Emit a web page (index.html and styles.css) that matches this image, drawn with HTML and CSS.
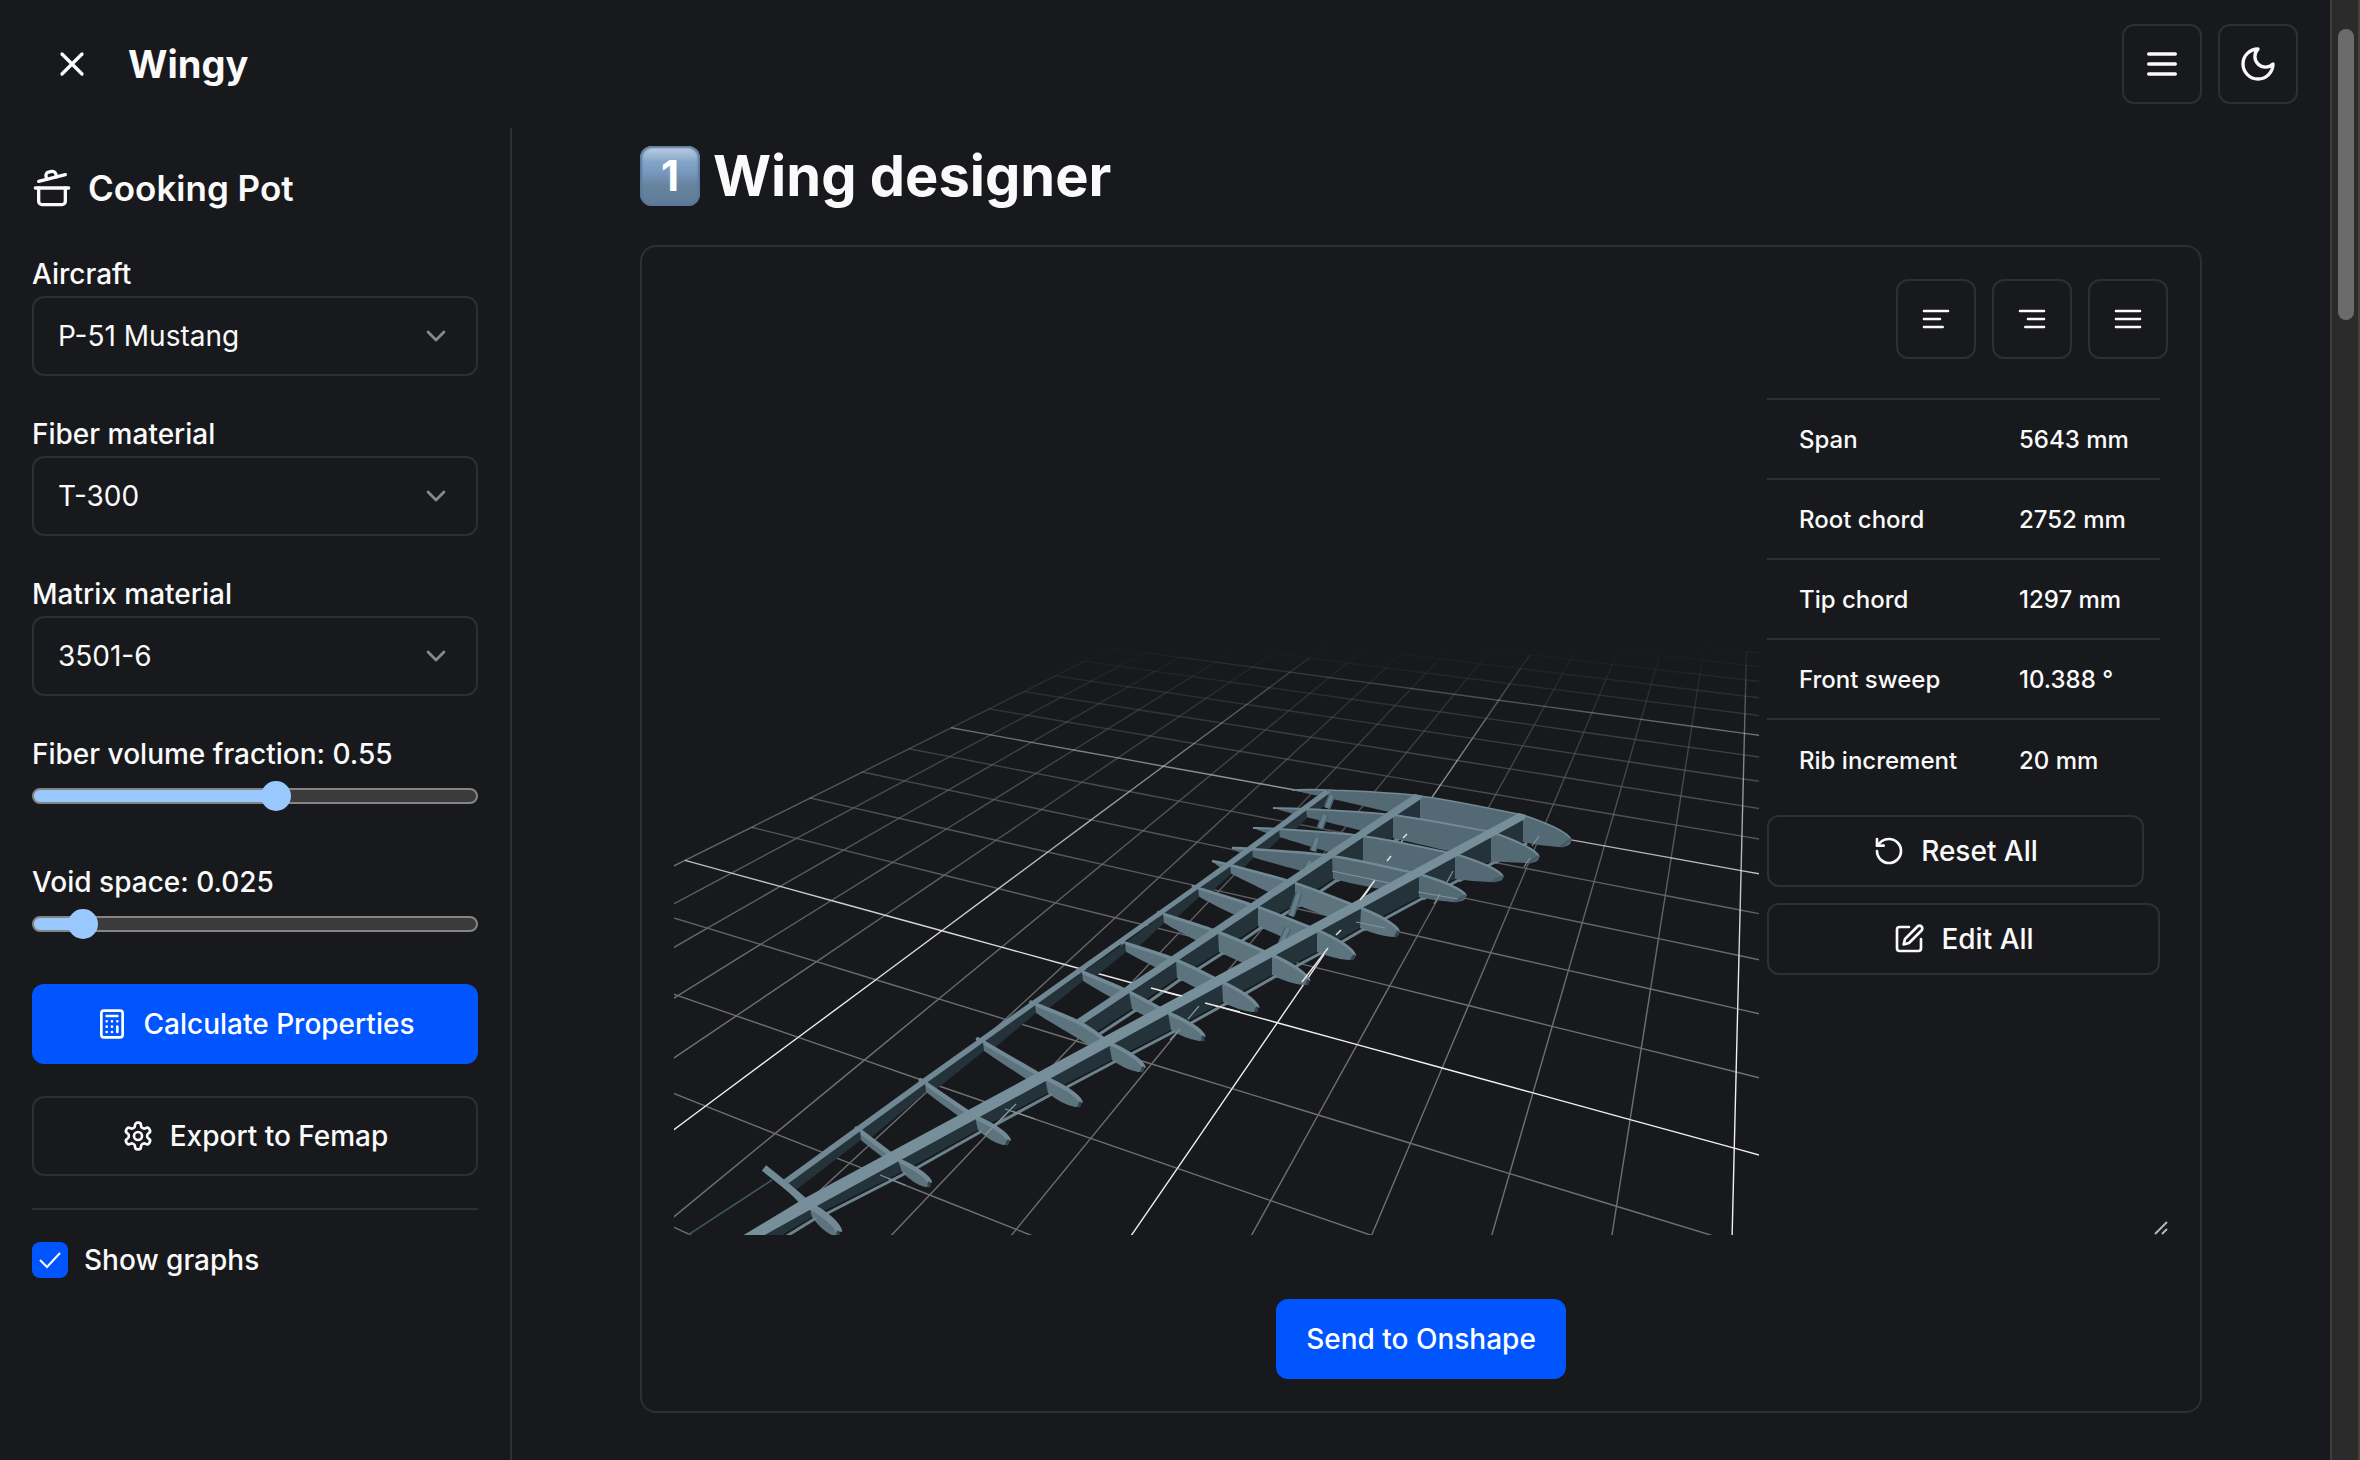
FILE: index.html
```html
<!DOCTYPE html>
<html lang="en">
<head>
  <meta charset="UTF-8">
  <title>Wingy</title>
  <link rel="stylesheet" href="styles.css">
</head>
<body>

<div class="app">
  <header class="header">
    <button class="icon-btn icon-btn-plain" aria-label="Close sidebar">
      <svg class="icon icon-lg" viewBox="0 0 24 24"><path d="M18 6 6 18"/><path d="m6 6 12 12"/></svg>
    </button>
    <a class="brand" href="#">Wingy</a>
    <nav class="header-nav">
      <button class="icon-btn" aria-label="Menu">
        <svg class="icon icon-lg" viewBox="0 0 24 24"><path d="M4 6h16M4 12h16M4 18h16"/></svg>
      </button>
      <button class="icon-btn" aria-label="Toggle theme">
        <svg class="icon icon-lg" viewBox="0 0 24 24"><path d="M12 3a6 6 0 0 0 9 9 9 9 0 1 1-9-9Z"/></svg>
      </button>
    </nav>
  </header>

  <div class="body">
    <aside class="sidebar">
      <h2 class="sidebar-title">
        <svg class="icon icon-lg" viewBox="0 0 24 24"><path d="M2 12h20"/><path d="M20 12v8a2 2 0 0 1-2 2H6a2 2 0 0 1-2-2v-8"/><path d="m4 8 16-4"/><path d="m8.86 6.78-.45-1.81a2 2 0 0 1 1.45-2.43l1.94-.48a2 2 0 0 1 2.43 1.46l.45 1.8"/></svg>
        Cooking Pot
      </h2>

      <div class="fields">
        <div class="field">
          <label for="aircraft">Aircraft</label>
          <div class="select">
            <select id="aircraft"><option>P-51 Mustang</option></select>
            <svg class="icon" viewBox="0 0 24 24"><path d="m6 9 6 6 6-6"/></svg>
          </div>
        </div>
        <div class="field">
          <label for="fiber">Fiber material</label>
          <div class="select">
            <select id="fiber"><option>T-300</option></select>
            <svg class="icon" viewBox="0 0 24 24"><path d="m6 9 6 6 6-6"/></svg>
          </div>
        </div>
        <div class="field">
          <label for="matrix">Matrix material</label>
          <div class="select">
            <select id="matrix"><option>3501-6</option></select>
            <svg class="icon" viewBox="0 0 24 24"><path d="m6 9 6 6 6-6"/></svg>
          </div>
        </div>
        <div class="field field-range">
          <label for="fraction">Fiber volume fraction: 0.55</label>
          <input type="range" id="fraction" min="0" max="1" step="0.01" value="0.55" style="--fill: 55%">
        </div>
        <div class="field field-range">
          <label for="void">Void space: 0.025</label>
          <input type="range" id="void" min="0" max="0.3" step="0.005" value="0.025" style="--fill: 9%">
        </div>
      </div>

      <div class="actions">
        <button class="btn btn-primary">
          <svg class="icon" viewBox="0 0 24 24"><rect x="4" y="2" width="16" height="20" rx="2"/><path d="M8 6h8M16 14v4M16 10h.01M12 10h.01M8 10h.01M12 14h.01M8 14h.01M12 18h.01M8 18h.01"/></svg>
          Calculate Properties
        </button>
        <button class="btn">
          <svg class="icon" viewBox="0 0 24 24"><path d="M12.22 2h-.44a2 2 0 0 0-2 2v.18a2 2 0 0 1-1 1.73l-.43.25a2 2 0 0 1-2 0l-.15-.08a2 2 0 0 0-2.73.73l-.22.38a2 2 0 0 0 .73 2.73l.15.1a2 2 0 0 1 1 1.72v.51a2 2 0 0 1-1 1.74l-.15.09a2 2 0 0 0-.73 2.73l.22.38a2 2 0 0 0 2.73.73l.15-.08a2 2 0 0 1 2 0l.43.25a2 2 0 0 1 1 1.73V20a2 2 0 0 0 2 2h.44a2 2 0 0 0 2-2v-.18a2 2 0 0 1 1-1.73l.43-.25a2 2 0 0 1 2 0l.15.08a2 2 0 0 0 2.73-.73l.22-.39a2 2 0 0 0-.73-2.73l-.15-.08a2 2 0 0 1-1-1.74v-.5a2 2 0 0 1 1-1.74l.15-.09a2 2 0 0 0 .73-2.73l-.22-.38a2 2 0 0 0-2.73-.73l-.15.08a2 2 0 0 1-2 0l-.43-.25a2 2 0 0 1-1-1.73V4a2 2 0 0 0-2-2z"/><circle cx="12" cy="12" r="3"/></svg>
          Export to Femap
        </button>
      </div>

      <hr class="divider">

      <div class="check">
        <span class="check-box">
          <input type="checkbox" id="graphs" checked>
          <svg viewBox="0 0 36 36"><path d="m8 18 7 7 13-14"/></svg>
        </span>
        <label for="graphs">Show graphs</label>
      </div>
    </aside>

    <main class="main">
      <h1 class="page-title"><span class="keycap">1</span>Wing designer</h1>

      <section class="card">
        <div class="viewer">
          <svg class="scene" id="scene" viewBox="674 276 1085 959" preserveAspectRatio="xMidYMax slice" role="img" aria-label="Wing model"></svg>

          <div class="panel">
            <div class="toolbar">
              <button class="icon-btn" aria-label="Align left">
                <svg class="icon" viewBox="0 0 24 24"><path d="M21 6H3M15 12H3M17 18H3"/></svg>
              </button>
              <button class="icon-btn" aria-label="Align right">
                <svg class="icon" viewBox="0 0 24 24"><path d="M21 6H3M21 12H9M21 18H7"/></svg>
              </button>
              <button class="icon-btn" aria-label="Justify">
                <svg class="icon" viewBox="0 0 24 24"><path d="M21 6H3M21 12H3M21 18H3"/></svg>
              </button>
            </div>

            <table class="specs">
              <tr><th>Span</th><td>5643 mm</td></tr>
              <tr><th>Root chord</th><td>2752 mm</td></tr>
              <tr><th>Tip chord</th><td>1297 mm</td></tr>
              <tr><th>Front sweep</th><td>10.388 °</td></tr>
              <tr><th>Rib increment</th><td>20 mm</td></tr>
            </table>

            <div class="panel-actions">
              <button class="btn btn-sm btn-reset">
                <svg class="icon" viewBox="0 0 24 24"><path d="M3 12a9 9 0 1 0 9-9 9.75 9.75 0 0 0-6.74 2.74L3 8"/><path d="M3 3v5h5"/></svg>
                Reset All
              </button>
              <button class="btn btn-sm">
                <svg class="icon" viewBox="0 0 24 24"><path d="M12 3H5a2 2 0 0 0-2 2v14a2 2 0 0 0 2 2h14a2 2 0 0 0 2-2v-7"/><path d="M18.375 2.625a2.121 2.121 0 1 1 3 3L12 15l-4 1 1-4Z"/></svg>
                Edit All
              </button>
            </div>
          </div>
          <svg class="grip" viewBox="0 0 14 14"><path d="M1 13 13 1M8 13l5-5"/></svg>
        </div>

        <button class="btn btn-primary btn-send">Send to Onshape</button>
      </section>
    </main>
  </div>
</div>

<div class="scrollbar"><div class="scrollbar-thumb"></div></div>

<script src="scene.js"></script>
</body>
</html>
```

FILE: styles.css
```css
* {
  margin: 0;
  padding: 0;
  box-sizing: border-box;
}

:root {
  --bg: #18191c;
  --border: #2e2f36;
  --text: #fafafa;
  --blue: #0055ff;
  --radius: 12px;
}

html, body {
  height: 100%;
}

body {
  display: flex;
  overflow: hidden;
  background: var(--bg);
  color: var(--text);
  font: 500 28px/40px Inter, "Liberation Sans", sans-serif;
}

button, select, input {
  font: inherit;
  color: inherit;
}

.app {
  flex: 1;
  display: flex;
  flex-direction: column;
}

.icon {
  flex: none;
  width: 32px;
  height: 32px;
  fill: none;
  stroke: currentColor;
  stroke-width: 2;
  stroke-linecap: round;
  stroke-linejoin: round;
}

.icon-lg {
  width: 40px;
  height: 40px;
}

/* header */
.header {
  display: flex;
  align-items: center;
  gap: 16px;
  height: 128px;
  padding: 0 32px;
}

.brand {
  color: inherit;
  font-size: 38px;
  font-weight: 700;
  text-decoration: none;
}

.header-nav {
  display: flex;
  gap: 16px;
  margin-left: auto;
}

.icon-btn {
  display: flex;
  align-items: center;
  justify-content: center;
  width: 80px;
  height: 80px;
  background: none;
  border: 2px solid var(--border);
  border-radius: var(--radius);
}

.icon-btn-plain {
  border-color: transparent;
}

.body {
  flex: 1;
  display: flex;
}

/* sidebar */
.sidebar {
  width: 512px;
  padding: 40px 32px;
  border-right: 2px solid var(--border);
}

.sidebar-title {
  display: flex;
  align-items: center;
  gap: 16px;
  font-size: 35px;
  font-weight: 600;
}

.fields {
  display: flex;
  flex-direction: column;
  gap: 36px;
  margin-top: 44px;
}

.field {
  display: flex;
  flex-direction: column;
}

.field label {
  line-height: 44px;
}

.select {
  display: grid;
  align-items: center;
}

.select > * {
  grid-area: 1 / 1;
}

.select select {
  width: 100%;
  height: 80px;
  padding: 0 24px;
  appearance: none;
  background: none;
  border: 2px solid var(--border);
  border-radius: var(--radius);
  font-weight: 400;
}

.select .icon {
  justify-self: end;
  margin-right: 26px;
  color: #8b8b8d;
  pointer-events: none;
}

.field-range + .field-range {
  margin-top: 8px;
}

input[type="range"] {
  width: 100%;
  height: 40px;
  appearance: none;
  background: none;
}

input[type="range"]::-webkit-slider-runnable-track {
  height: 16px;
  border: 2px solid #858585;
  border-radius: 8px;
  background: linear-gradient(to right, #99c8ff var(--fill), #3b3b3b var(--fill));
}

input[type="range"]::-webkit-slider-thumb {
  appearance: none;
  width: 30px;
  height: 30px;
  margin-top: -9px;
  border-radius: 50%;
  background: #99c8ff;
}

.actions {
  display: flex;
  flex-direction: column;
  gap: 32px;
  margin-top: 40px;
}

.btn {
  display: flex;
  align-items: center;
  justify-content: center;
  gap: 16px;
  height: 80px;
  padding: 0 30px;
  background: var(--bg);
  border: 2px solid var(--border);
  border-radius: var(--radius);
}

.btn-sm {
  height: 72px;
}

.btn-primary {
  background: var(--blue);
  border: 0;
  color: #fff;
}

.divider {
  margin: 32px 0;
  border: 0;
  border-top: 2px solid var(--border);
}

.check {
  display: flex;
  align-items: center;
  gap: 16px;
  height: 36px;
}

.check-box {
  display: grid;
  width: 36px;
  height: 36px;
}

.check-box > * {
  grid-area: 1 / 1;
}

.check input {
  appearance: none;
  border-radius: 8px;
  background: var(--blue);
}

.check svg {
  fill: none;
  stroke: #fff;
  stroke-width: 2;
  pointer-events: none;
}

/* main */
.main {
  flex: 1;
  padding: 16px 128px 0;
}

.page-title {
  display: flex;
  align-items: center;
  gap: 13px;
  font-size: 56px;
  font-weight: 700;
  line-height: 64px;
}

.keycap {
  width: 60px;
  height: 60px;
  border-radius: 12px;
  background: linear-gradient(#c3d3e6, #84a5c9 26%, #7698bd 45%, #67849f 65%, #5d7b97);
  box-shadow: inset 0 0 2px 2px #59789a;
  color: #fff;
  font-size: 42px;
  line-height: 60px;
  text-align: center;
}

.card {
  margin-top: 37px;
  padding: 32px;
  border: 2px solid var(--border);
  border-radius: 16px;
}

.viewer {
  position: relative;
  display: flex;
  gap: 8px;
  height: 956px;
}

.scene {
  flex: 1;
  min-width: 0;
  height: 100%;
}

.panel {
  width: 401px;
}

.toolbar {
  display: flex;
  justify-content: flex-end;
  gap: 16px;
}

.specs {
  width: 393px;
  margin-top: 39px;
  border-collapse: collapse;
  font-size: 24px;
}

.specs tr {
  height: 80px;
  border-top: 2px solid var(--border);
}

.specs th,
.specs td {
  padding: 2px 0 0 32px;
  font-weight: 500;
  text-align: left;
  white-space: nowrap;
}

.specs th {
  width: 220px;
}

.panel-actions {
  display: flex;
  flex-direction: column;
  gap: 16px;
  margin: 16px 8px 0 0;
}

.btn-reset {
  margin-right: 16px;
}

.grip {
  position: absolute;
  right: 0;
  bottom: 0;
  width: 14px;
  height: 14px;
  fill: none;
  stroke: #b5b5b5;
  stroke-width: 2;
}

.btn-send {
  margin: 64px auto 0;
}

/* page scrollbar */
.scrollbar {
  width: 30px;
  padding: 29px 4px 0 6px;
  background: #2b2b2b;
  border-left: 2px solid #3d3d3d;
  border-right: 2px solid #424242;
}

.scrollbar-thumb {
  height: 291px;
  border-radius: 8px;
  background: #6b6b6b;
}
```

FILE: scene.js
```javascript
var NS = "http://www.w3.org/2000/svg";
var scene = document.getElementById("scene");

function add(tag, attrs) {
  var el = document.createElementNS(NS, tag);
  for (var key in attrs) {
    el.setAttribute(key, attrs[key]);
  }
  scene.appendChild(el);
}

function poly(points, fill) {
  add("polygon", {points: points.join(" "), fill: fill});
}

function line(a, b, color, width, cap) {
  add("line", {x1: a[0], y1: a[1], x2: b[0], y2: b[1], stroke: color, "stroke-width": width, "stroke-linecap": cap || "butt"});
}

//1 floor grid, projected from cell coordinates
function depth(u, v) {
  return 1 - 0.01763 * u - 0.04976 * v;
}

function project(u, v) {
  var w = depth(u, v);
  return [(951.1 + 21.97 * u - 87.3 * v) / w, (727.8 - 5.83 * u - 16.3 * v) / w];
}

function gridCell(u1, v1, u2, v2, major) {
  if (depth(u1, v1) < 0.05 || depth(u2, v2) < 0.05) return;
  //the lines fade out with distance
  var alpha = (1.25 - depth((u1 + u2) / 2, (v1 + v2) / 2)) * 1.5;
  alpha = Math.max(0, Math.min(1, alpha));
  if (alpha === 0) return;
  //only half of the outer line is inside the plane
  if (u1 === 0 && u2 === 0) alpha = alpha / 2;
  var grey = major ? "rgba(240,240,240," : "rgba(112,112,115,";
  line(project(u1, v1), project(u2, v2), grey + alpha.toFixed(2) + ")", 1.4);
}

function drawGrid(major) {
  for (var i = 0; i <= 18; i++) {
    for (var j = -14; j <= 16; j++) {
      if ((i % 5 === 0) === major && i <= 15) gridCell(i, j, i, j + 1, major);
      if ((j % 5 === 0) === major) gridCell(i, j, i + 1, j, major);
    }
  }
}

drawGrid(false);
drawGrid(true);

//2 ribs from root to tip
// t: tail, r m f: top at the rear, middle and front spar, mb fb: bottom there, n: nose, nb: under the nose
var ribs = [
  {t: [1292, 790], r: [1328, 790], m: [1420, 796], mb: [1420, 819], f: [1523, 815], fb: [1523, 842], n: [1571, 840], nb: [1558, 847]},
  {t: [1273, 808], r: [1306, 809], m: [1393, 815], mb: [1393, 838], f: [1491, 832], fb: [1491, 861], n: [1539, 857], nb: [1526, 863]},
  {t: [1253, 828], r: [1279, 829], m: [1363, 836], mb: [1363, 861], f: [1455, 854], fb: [1455, 879], n: [1503, 877], nb: [1490, 882]},
  {t: [1232, 848], r: [1252, 849], m: [1332, 856], mb: [1333, 879], f: [1419, 874], fb: [1419, 897], n: [1466, 896], nb: [1452, 902]},
  {t: [1212, 861], r: [1230, 865], m: [1295, 883], mb: [1295, 904], f: [1361, 908], fb: [1360, 928], n: [1399, 932], nb: [1392, 937]},
  {t: [1196, 887], r: [1198, 888], m: [1258, 907], mb: [1258, 926], f: [1317, 930], fb: [1317, 952], n: [1355, 956], nb: [1348, 960]},
  {t: [1161, 913], r: [1163, 914], m: [1218, 932], mb: [1219, 952], f: [1272, 955], fb: [1272, 975], n: [1309, 981], nb: [1303, 985]},
  {t: [1123, 942], r: [1125, 943], m: [1176, 960], mb: [1177, 978], f: [1222, 982], fb: [1223, 1002], n: [1258, 1008], nb: [1252, 1012]},
  {t: [1080, 971], r: [1082, 972], m: [1129, 992], mb: [1132, 1009], f: [1168, 1013], fb: [1171, 1030], n: [1204, 1037], nb: [1199, 1041]},
  {t: [1033, 1003], r: [1035, 1004], m: [1080, 1023], mb: [1082, 1041], f: [1109, 1043], fb: [1112, 1060], n: [1144, 1068], nb: [1138, 1072]},
  {t: [981, 1041], r: [983, 1042], f: [1045, 1078], fb: [1048, 1093], n: [1081, 1103], nb: [1075, 1107]},
  {t: [923, 1082], r: [925, 1083], f: [975, 1117], fb: [978, 1130], n: [1009, 1141], nb: [1003, 1145]},
  {t: [858, 1130], r: [860, 1131], f: [898, 1160], fb: [902, 1172], n: [930, 1183], nb: [925, 1187]},
  {t: [764, 1168], r: [784, 1184], f: [809, 1205], fb: [812, 1217], n: [839, 1232], nb: [834, 1236]},
  {t: [660, 1252], r: [676, 1262], f: [706, 1265], fb: [710, 1279], n: [730, 1290], nb: [725, 1295]}
];

//smooth line through the points
function curve(p) {
  var d = "";
  for (var i = 0; i < p.length - 1; i++) {
    var a = p[i - 1] || p[i], b = p[i], c = p[i + 1], e = p[i + 2] || c;
    d += " C" + [b[0] + (c[0] - a[0]) / 6, b[1] + (c[1] - a[1]) / 6,
      c[0] - (e[0] - b[0]) / 6, c[1] - (e[1] - b[1]) / 6, c[0], c[1]].join(" ");
  }
  return d;
}

function drawRib(rib, k) {
  var top = rib.m ? [rib.t, rib.r, rib.m, rib.f] : [rib.t, rib.r, rib.f];
  var low = [rib.fb];
  if (rib.mb) low.push(rib.mb);
  low.push([rib.r[0], rib.r[1] + (k === 13 ? 3 : 8)], rib.t);
  //round nose: the edge leaves the spar along the rib and turns down at the tip
  var dx = rib.n[0] - rib.f[0], dy = rib.n[1] - rib.f[1];
  var nose = " C" + [rib.f[0] + dx * 0.45, rib.f[1] + dy * 0.28,
    rib.n[0] - dx * 0.04, rib.n[1] - dy * 0.3, rib.n[0], rib.n[1]].join(" ");
  var chin = " Q" + [rib.n[0] + 1, rib.nb[1], rib.nb[0], rib.nb[1]].join(" ") +
    " Q" + [(rib.nb[0] + rib.fb[0]) / 2, rib.nb[1] - (rib.nb[1] - rib.fb[1]) * 0.2, rib.fb[0], rib.fb[1]].join(" ");
  var start = "M" + rib.t.join(" ") + curve(top) + nose;
  add("path", {d: start + chin + curve(low) + "Z", fill: k < 4 ? "#536973" : "#5d747e"});
  add("path", {d: start, fill: "none", stroke: "#728a95", "stroke-width": 1.6 + k * 0.25 + (k === 13 ? 2 : 0)});
  //shaded nose
  line([rib.n[0] - 1, rib.n[1]], [rib.nb[0] + 4, rib.nb[1] - 1], k < 4 ? "#465b65" : "#33454e", 3, "round");
}

function web(a, al, b, bl) {
  line([al[0] + 4, al[1] + 1], [bl[0] + 4, bl[1] + 2], "#6b838d", 3);
  poly([a, al, bl, b], "#24323a");
}

ribs.forEach(function (rib, k) {
  drawRib(rib, k);
  var next = ribs[k + 1];
  if (!next) return;
  web(rib.f, rib.fb, next.f, next.fb);
  if (k < 9) web(rib.m, rib.mb, next.m, next.mb);
  if (k < 13) poly([rib.r, [rib.r[0] + 1, rib.r[1] + 9], [next.r[0] + 8, next.r[1] + 9], next.r], "#24323a");
});

//3 actuator tube
[
  [1332, 795, 1327, 808], [1325, 815, 1320, 828], [1317, 838, 1313, 851], [1310, 861, 1305, 872],
  [1299, 893, 1291, 916], [1288, 928, 1281, 944]
].forEach(function (s) {
  line([s[0], s[1]], [s[2], s[3]], "#4c626c", 7);
  line([s[0], s[1]], [s[2], s[3]], "#647f8b", 4);
});

//4 upper flanges of the spars
poly([[1325, 790], [1331, 792], [1231, 866], [1198, 889], [925, 1084], [789, 1183], [783, 1180], [921, 1080], [1194, 886], [1227, 862]], "#6f8893");
poly([[1415, 794], [1423, 796], [1421, 799], [1084, 1023], [1076, 1020]], "#728a95");
poly([[1519, 813], [1526, 815], [1525, 819], [815, 1207], [763, 1236], [742, 1236], [805, 1198]], "#768f9a");
line([772, 1180], [688, 1235], "#3d5660", 1.5);

//5 pieces of the grid in front of the wing
[
  [1403, 838, 1407, 834], [1387, 861, 1391, 856], [1360, 900, 1375, 880], [1336, 935, 1341, 930],
  [1302, 982, 1328, 948], [1151, 988, 1182, 996], [1205, 1003, 1240, 1012]
].forEach(function (s) {
  line([s[0], s[1]], [s[2], s[3]], "#e6e6e6", 1.4);
});
[
  [1332, 871, 1389, 883], [1356, 922, 1385, 928], [1418, 892, 1458, 899], [1532, 846, 1539, 836],
  [1524, 867, 1530, 858], [1447, 882, 1453, 871], [1434, 904, 1440, 894], [1188, 1019, 1199, 1006],
  [1170, 1040, 1180, 1029], [880, 1175, 905, 1185], [1005, 1109, 1035, 1119], [985, 1135, 1016, 1104]
].forEach(function (s) {
  line([s[0], s[1]], [s[2], s[3]], "#85939a", 1.2);
});
```
